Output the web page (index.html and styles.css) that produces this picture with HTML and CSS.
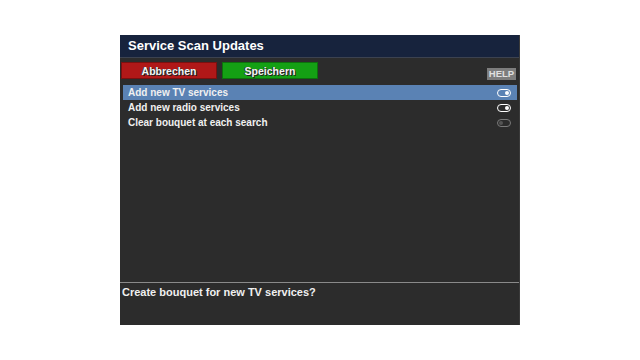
FILE: index.html
```html
<!DOCTYPE html>
<html>
<head>
<meta charset="utf-8">
<link rel="stylesheet" href="styles.css">
</head>
<body>
<div class="screen">
  <div class="window">
    <div class="title">Service Scan Updates</div>
    <div class="toolbar">
      <div class="btn btn-red">Abbrechen</div>
      <div class="btn btn-green">Speichern</div>
      <div class="spacer"></div>
      <div class="help">HELP</div>
    </div>
    <div class="list">
      <div class="row selected"><span>Add new TV services</span><span class="toggle on"></span></div>
      <div class="row"><span>Add new radio services</span><span class="toggle on"></span></div>
      <div class="row"><span>Clear bouquet at each search</span><span class="toggle off"></span></div>
    </div>
    <div class="footer">Create bouquet for new TV services?</div>
  </div>
</div>
</body>
</html>
```
FILE: styles.css
```css
html, body {
  margin: 0;
  padding: 0;
  background: #ffffff;
}
.screen {
  width: 640px;
  height: 360px;
  display: flex;
  align-items: center;
  justify-content: center;
}
.window {
  width: 400px;
  height: 290px;
  background: #2c2c2c;
  display: flex;
  flex-direction: column;
  font-family: "Liberation Sans", Arial, sans-serif;
  font-weight: bold;
  color: #f0f0f0;
  box-sizing: border-box;
  border-right: 1px solid #3a3a3a;
}
.title {
  height: 22px;
  background: #17233d;
  color: #ffffff;
  font-size: 13px;
  line-height: 22px;
  padding-left: 8px;
  border-bottom: 1px solid #3c4250;
}
.toolbar {
  display: flex;
  align-items: flex-start;
  padding: 4px 3px 0 1px;
  box-sizing: border-box;
  height: 27px;
}
.btn {
  width: 96px;
  height: 17px;
  line-height: 16px;
  text-align: center;
  font-size: 10.5px;
  font-weight: bold;
  color: #f4f4f4;
  text-shadow: 1px 1px 0 #222, -1px 0 0 #333;
  box-sizing: border-box;
}
.btn-red {
  background: #b01818;
  border: 1px solid #7a1010;
}
.btn-green {
  background: #14a014;
  border: 1px solid #0d700d;
  margin-left: 5px;
}
.spacer { flex: 1; }
.help {
  margin-top: 6px;
  width: 29px;
  height: 12px;
  line-height: 12px;
  background: #7d7d7d;
  color: #e0e0e0;
  font-size: 9.5px;
  text-align: center;
}
.list {
  flex: 1;
  padding: 0 2px 0 3px;
}
.row {
  height: 15px;
  display: flex;
  align-items: center;
  justify-content: space-between;
  padding: 0 6px 0 5px;
  font-size: 10px;
}
.row.selected {
  background: #5a82b4;
}
.toggle {
  width: 12px;
  height: 6px;
  border-radius: 5px;
  border: 1.5px solid #ffffff;
  position: relative;
}
.toggle::after {
  content: "";
  position: absolute;
  top: 1px;
  width: 4px;
  height: 4px;
  border-radius: 50%;
}
.toggle.on::after {
  right: 1px;
  background: #ffffff;
}
.toggle.off {
  border-color: #7a7a7a;
}
.toggle.off::after {
  left: 1px;
  background: #555555;
}
.footer {
  box-sizing: border-box;
  height: 43px;
  border-top: 1px solid #8a8a8a;
  padding: 3px 2px 0;
  font-size: 11px;
  color: #f0f0f0;
}
```
